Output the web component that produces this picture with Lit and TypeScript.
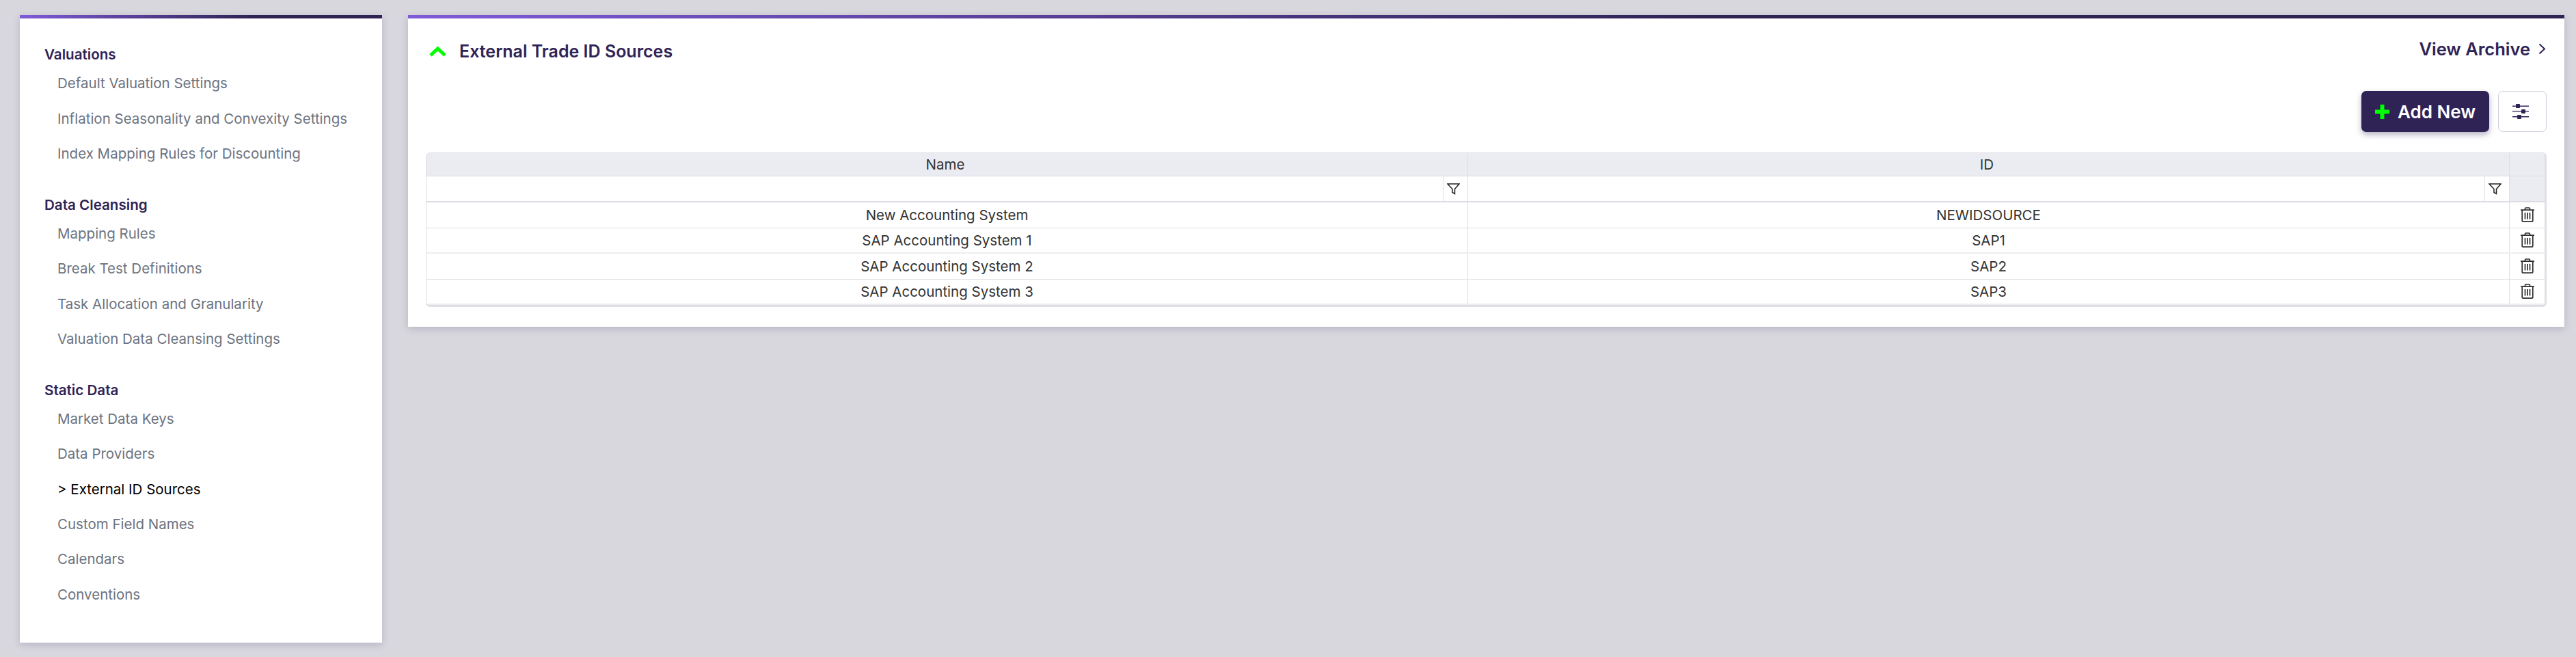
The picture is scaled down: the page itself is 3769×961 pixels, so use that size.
import { LitElement, html, css } from "lit";
import { customElement } from "lit/decorators.js";

const NAV = [
  { title: "Valuations", items: ["Default Valuation Settings", "Inflation Seasonality and Convexity Settings", "Index Mapping Rules for Discounting"] },
  { title: "Data Cleansing", items: ["Mapping Rules", "Break Test Definitions", "Task Allocation and Granularity", "Valuation Data Cleansing Settings"] },
  { title: "Static Data", items: ["Market Data Keys", "Data Providers", "> External ID Sources", "Custom Field Names", "Calendars", "Conventions"] },
];
const ROWS = [
  ["New Accounting System", "NEWIDSOURCE"],
  ["SAP Accounting System 1", "SAP1"],
  ["SAP Accounting System 2", "SAP2"],
  ["SAP Accounting System 3", "SAP3"],
];

const filterIcon = html`<svg class="filter" viewBox="0 0 19 17" width="19" height="17" fill="none" stroke="#222" stroke-width="1.5"><path d="M1 1h17l-6.5 7.5v7l-3.5-2v-5z" stroke-linejoin="miter"/></svg>`;
const trashIcon = html`<svg viewBox="0 0 20 22" width="20" height="22" fill="none" stroke="#2e2e2e" stroke-width="1.7"><path d="M0 4.2h20"/><path d="M6.5 4V2.2Q6.5 1 7.7 1h4.6q1.2 0 1.2 1.2V4"/><path d="M2.2 4.5v15.3Q2.2 21.2 3.6 21.2h12.8q1.4 0 1.4-1.4V4.5"/><path d="M6.5 8v9.5M10 8v9.5M13.5 8v9.5"/></svg>`;

@customElement("app-root")
export class AppRoot extends LitElement {
  static styles = css`
    :host { display: block; min-height: 961px; background: #d8d7de; font-family: "Inter", "Liberation Sans", sans-serif; }
    .page { display: flex; align-items: flex-start; gap: 38px; padding: 22px 17px 21px 29px; box-sizing: border-box; min-height: 961px; }
    .card { background: #fff; box-shadow: 0 3px 10px rgba(70, 65, 100, 0.22); border-top: 5px solid transparent; box-sizing: border-box; }
    .bar { height: 5px; margin-top: -5px; }
    .side { width: 530px; height: 918px; flex: none; }
    .side .bar { background: linear-gradient(90deg, #7f5bd8, #2f2355 64%); }
    .main { flex: 1; min-width: 0; height: 456px; display: flex; flex-direction: column; }
    .main .bar { background: linear-gradient(90deg, #7f5bd8, #2f2355 60%); }
    .nav { padding: 40px 0 0 36px; }
    .group { margin-bottom: 36.5px; }
    h3 { margin: 0 0 3px; font-size: 20.6px; line-height: 26px; font-weight: 600; color: #2f2355; }
    .item { height: 51.4px; display: flex; align-items: center; padding-left: 19px; font-size: 20.5px; color: #6c7380; }
    .item.on { color: #000; }
    .head { display: flex; align-items: center; justify-content: space-between; box-sizing: border-box; padding: 23px 27px 0 31px; height: 73px; }
    .title { display: flex; align-items: center; gap: 19px; font-size: 25px; font-weight: 600; color: #2f2355; }
    .archive { display: flex; align-items: center; gap: 12px; font-size: 25.5px; font-weight: 600; color: #2f2355; margin-top: -8px; }
    .tools { display: flex; justify-content: flex-end; gap: 13px; padding: 33px 26px 30px 0; }
    .add { width: 187px; height: 60px; box-sizing: border-box; padding-left: 20px; border-radius: 7px; background: #2f2355; color: #fff; display: flex; align-items: center; gap: 12px; font-size: 26px; font-weight: 600; box-shadow: 0 4px 8px rgba(47, 35, 85, 0.35); }
    .opts { width: 71px; height: 60px; box-sizing: border-box; padding-right: 6px; border: 1px solid #cfd0da; border-radius: 7px; display: flex; align-items: center; justify-content: center; }
    .table { margin: 0 26px; border: 2px solid #dfdfe6; border-width: 1px 3px 3px 1px; border-radius: 6px; font-size: 20.5px; color: #333; overflow: hidden; }
    .row { display: grid; grid-template-columns: 1524px 1524px 1fr; box-sizing: border-box; }
    .cell { display: flex; align-items: center; justify-content: center; border-right: 1px solid #dfdfe6; }
    .cell:last-child { border-right: 0; }
    .r-head { height: 34px; background: #ebecf2; border-bottom: 1px solid #dcdce4; }
    .r-head .cell { padding-right: 5px; }
    .r-filter { height: 38px; border-bottom: 2px solid #dcdce4; }
    .r-filter .end { background: #ebecf2; }
    .r-filter .cell { justify-content: flex-end; }
    .fbox { width: 36px; height: 100%; box-sizing: border-box; padding-right: 7px; border-left: 1px solid #dfdfe6; display: flex; align-items: center; justify-content: center; }
    .r-data { height: 37.5px; border-bottom: 1px solid #dfdfe6; }
    .r-data.alt { border-bottom: 2px solid #eeeef1; }
  `;

  render() {
    return html`<div class="page">
      <aside class="card side">
        <div class="bar"></div>
        <div class="nav">
          ${NAV.map((g) => html`<section class="group">
            <h3>${g.title}</h3>
            ${g.items.map((i) => html`<div class="item ${i.startsWith(">") ? "on" : ""}">${i}</div>`)}
          </section>`)}
        </div>
      </aside>
      <main class="card main">
        <div class="bar"></div>
        <div class="head">
          <div class="title">
            <svg width="25" height="15" viewBox="0 0 25 15" fill="none" stroke="#00ff00" stroke-width="5"><path d="M2 13L12.5 3L23 13"/></svg>
            External Trade ID Sources
          </div>
          <div class="archive">View Archive
            <svg width="11" height="17" viewBox="0 0 11 17" fill="none" stroke="#2f2355" stroke-width="2"><path d="M1.5 1.5L9 8.5L1.5 15.5"/></svg>
          </div>
        </div>
        <div class="tools">
          <div class="add">
            <svg width="21" height="21" viewBox="0 0 21 21" fill="#00ff00"><path d="M7.5 0h6v7.5H21v6h-7.5V21h-6v-7.5H0v-6h7.5z"/></svg>
            Add New
          </div>
          <div class="opts">
            <svg width="24" height="22" viewBox="0 0 24 22" fill="#2f2355"><path d="M0 2.5h24v1.4H0zM0 10.2h24v1.4H0zM0 18h24v1.4H0z"/><rect x="5" y="0" width="6" height="6" rx="1"/><rect x="13" y="8" width="6" height="6" rx="1"/><rect x="7" y="16" width="6" height="6" rx="1"/></svg>
          </div>
        </div>
        <div class="table">
          <div class="row r-head"><div class="cell">Name</div><div class="cell">ID</div><div class="cell"></div></div>
          <div class="row r-filter">
            <div class="cell"><div class="fbox">${filterIcon}</div></div>
            <div class="cell"><div class="fbox">${filterIcon}</div></div>
            <div class="cell end"></div>
          </div>
          ${ROWS.map((r, i) => html`<div class="row r-data ${i % 2 ? "alt" : ""}">
            <div class="cell">${r[0]}</div><div class="cell">${r[1]}</div><div class="cell">${trashIcon}</div>
          </div>`)}
        </div>
      </main>
    </div>`;
  }
}
